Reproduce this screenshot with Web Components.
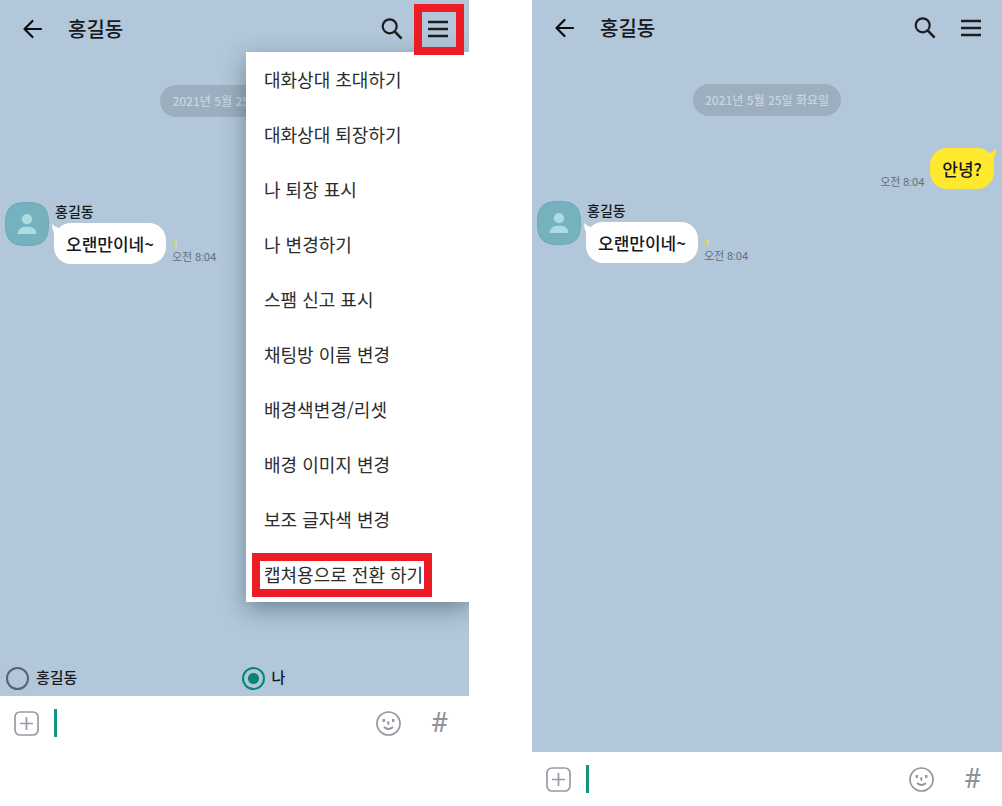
<!DOCTYPE html>
<html lang="ko">
<head>
<meta charset="utf-8">
<meta name="viewport" content="width=device-width, initial-scale=1">
<title>채팅방</title>
<style>
  body {
    --hangul: "Noto Sans CJK KR", "Noto Sans", sans-serif;
    margin: 0;
    background: #fff;
    color: #16181b;
    font-family: Roboto, "Noto Sans CJK KR", sans-serif;
  }
</style>
</head>
<body>
<phone-pair>
  <chat-phone class="editing">
    <chat-header slot="header" name="홍길동" marked></chat-header>
    <date-pill>2021년 5월 25일 화요일</date-pill>
    <peer-message class="later" name="홍길동" time="오전 8:04" unread="1">오랜만이네~</peer-message>
    <sender-picker slot="sender"></sender-picker>
    <chat-composer slot="composer"></chat-composer>
    <option-menu slot="menu">
      <menu-item>대화상대 초대하기</menu-item>
      <menu-item>대화상대 퇴장하기</menu-item>
      <menu-item>나 퇴장 표시</menu-item>
      <menu-item>나 변경하기</menu-item>
      <menu-item>스팸 신고 표시</menu-item>
      <menu-item>채팅방 이름 변경</menu-item>
      <menu-item>배경색변경/리셋</menu-item>
      <menu-item>배경 이미지 변경</menu-item>
      <menu-item>보조 글자색 변경</menu-item>
      <menu-item marked>캡쳐용으로 전환 하기</menu-item>
    </option-menu>
  </chat-phone>
  <chat-phone>
    <chat-header slot="header" name="홍길동"></chat-header>
    <date-pill>2021년 5월 25일 화요일</date-pill>
    <own-message time="오전 8:04">안녕?</own-message>
    <peer-message name="홍길동" time="오전 8:04" unread="1">오랜만이네~</peer-message>
    <chat-composer slot="composer"></chat-composer>
  </chat-phone>
</phone-pair>

<script>
const define = (tag, render) => customElements.define(tag, class extends HTMLElement {
  constructor() {
    super();
    this.attachShadow({ mode: 'open' }).innerHTML = render(this);
  }
});
const buttonReset = `
  button { border: 0; padding: 0; background: none; color: inherit; font: inherit; cursor: pointer; display: block; }
  svg { display: block; }`;

define('phone-pair', () => `
  <style>
    :host { display: grid; grid-template-columns: 469fr 470fr; gap: 63px; align-items: start; min-height: 100vh; }
    ::slotted(*) { min-height: 100vh; }
    ::slotted(.editing) { min-height: calc(100vh - 56px); padding-top: 1px; }
  </style>
  <slot></slot>`);

define('chat-phone', () => `
  <style>
    :host { display: flex; flex-direction: column; position: relative; overflow: hidden; box-sizing: border-box; background: #b2c7da; }
    main { flex: 1; display: flex; flex-direction: column; padding-top: 28px; }
    ::slotted(own-message) { margin-top: 32px; }
    ::slotted(peer-message) { margin-top: 12px; }
    ::slotted(peer-message.later) { margin-top: 85px; }
    ::slotted(option-menu) { position: absolute; top: 52px; right: 0; }
  </style>
  <slot name="header"></slot>
  <main><slot></slot></main>
  <slot name="sender"></slot>
  <slot name="composer"></slot>
  <slot name="menu"></slot>`);

define('chat-header', el => `
  <style>
    :host { display: block; }
    ${buttonReset}
    header { display: flex; align-items: center; height: 56px; padding: 0 20px 0 22px; }
    h1 { flex: 1; margin: 0 0 0 24px; font-family: var(--hangul); font-size: 20px; line-height: 28px; font-weight: 500; }
    .more { position: relative; margin-left: 24px; }
    .mark { position: absolute; z-index: 2; inset: -14px -15px -15px -13px; border: 8px solid #ed1c24; pointer-events: none; }
  </style>
  <header>
    <button aria-label="뒤로"><svg width="22" height="22" viewBox="0 0 22 22" fill="none" stroke="#0c0d0e" stroke-width="2.2" stroke-linecap="round" stroke-linejoin="round"><path d="M19 11H2.5M10.5 3L2.5 11L10.5 19"/></svg></button>
    <h1>${el.getAttribute('name')}</h1>
    <button aria-label="검색"><svg width="22" height="22" viewBox="0 0 22 22" fill="none" stroke="#1b1d1f" stroke-width="2.2"><circle cx="8.7" cy="8.3" r="7"/><path d="M13.6 13.4L20.6 20.6" stroke-width="2.6"/></svg></button>
    <button class="more" aria-label="메뉴"><svg width="22" height="22" viewBox="0 0 22 22" stroke="#1b1d1f" stroke-width="2.4"><path d="M1 4H21M1 11H21M1 18H21"/></svg>${el.hasAttribute('marked') ? '<span class="mark"></span>' : ''}</button>
  </header>`);

define('date-pill', () => `
  <style>
    :host { align-self: center; display: block; box-sizing: border-box; padding: 0 12px; border-radius: 16px; background: #9dafbe; color: #c6d5e1; font-family: var(--hangul); font-size: 12px; line-height: 32px; font-weight: 500; white-space: nowrap; }
  </style>
  <slot></slot>`);

define('own-message', el => `
  <style>
    :host { display: flex; justify-content: flex-end; align-items: flex-end; gap: 6px; padding-right: 8px; }
    time { color: #64707a; font-size: 11px; line-height: 13px; }
    p { position: relative; margin: 0; padding: 0 12px; border-radius: 17px; background: #ffe92f; font-family: var(--hangul); font-size: 17px; line-height: 41px; font-weight: 500; }
    svg { position: absolute; top: 1px; right: -2px; }
  </style>
  <time>${el.getAttribute('time')}</time>
  <p><svg width="12" height="14" viewBox="0 0 12 14" fill="#ffe92f"><path d="M5 4Q9 3 12 0Q12 5 10 9V14Z"/></svg><slot></slot></p>`);

define('peer-message', el => `
  <style>
    :host { display: flex; align-items: flex-start; gap: 5px; padding-left: 5px; }
    h2 { margin: 0; padding-left: 1px; font-size: 14px; line-height: 20px; padding-bottom: 1px; font-weight: 500; }
    .line { display: flex; align-items: flex-end; gap: 6px; }
    p { position: relative; margin: 0; padding: 0 12px; border-radius: 17px; background: #fff; font-family: var(--hangul); font-size: 17px; line-height: 41px; font-weight: 500; }
    p svg { position: absolute; top: 1px; left: -2px; }
    .meta { display: flex; flex-direction: column; color: #64707a; font-size: 11px; line-height: 13px; }
    b { color: #e6dc3c; font-size: 11px; font-weight: 700; }
    .avatar { flex: none; display: block; }
  </style>
  <svg class="avatar" width="44" height="44" viewBox="0 0 44 44" role="img" aria-label="프로필"><path d="M22 .5C38 .5 43.500 6 43.500 22S38 43.500 22 43.500S.5 38 .5 22S6 .5 22 .5Z" fill="#76b2be" stroke="#6ba7b3"/><circle cx="22" cy="17.200" r="5.100" fill="#acdbe2"/><path d="M12.500 32C13 26.500 17 24.800 22 24.800S31 26.500 31.500 32Z" fill="#acdbe2"/></svg>
  <div>
    <h2>${el.getAttribute('name')}</h2>
    <div class="line">
      <p><svg width="12" height="14" viewBox="0 0 12 14" fill="#fff"><path d="M7 4Q3 3 0 0Q0 5 2 9V14Z"/></svg><slot></slot></p>
      <div class="meta"><b>${el.getAttribute('unread')}</b><time>${el.getAttribute('time')}</time></div>
    </div>
  </div>`);

define('sender-picker', () => `
  <style>
    :host { display: block; }
    fieldset { display: grid; grid-template-columns: 1fr 1fr; gap: 8px; margin: 0; border: 0; padding: 0 0 0 6px; height: 36px; min-width: 0; }
    label { display: flex; align-items: center; gap: 7px; font-size: 15px; line-height: 20px; font-weight: 500; }
    input { appearance: none; box-sizing: border-box; width: 23px; height: 23px; margin: 0; border: 2px solid #58626b; border-radius: 50%; }
    input:checked { border-color: #058672; background: radial-gradient(circle, #058672 5px, transparent 6px); }
  </style>
  <fieldset aria-label="보내는 사람">
    <label><input type="radio" name="sender">홍길동</label>
    <label><input type="radio" name="sender" checked>나</label>
  </fieldset>`);

define('chat-composer', () => `
  <style>
    :host { display: block; background: #fff; }
    ${buttonReset}
    form { display: flex; align-items: center; height: 54px; padding: 0 20px 0 14px; color: #8e939b; }
    .caret { width: 3px; height: 28px; margin-left: 15px; background: #149380; }
    input { flex: 1; min-width: 0; border: 0; outline: 0; padding: 0 8px; background: none; font: inherit; font-size: 17px; line-height: 28px; color: #16181b; }
    .hash { margin-left: 28px; width: 20px; font-size: 28px; line-height: 28px; font-weight: 400; }
  </style>
  <form>
    <button type="button" aria-label="첨부"><svg width="25" height="25" viewBox="0 0 25 25" fill="none" stroke="#969aa3" stroke-width="1.700"><rect x="1" y="1" width="23" height="23" rx="5"/><path d="M6 12.500H19M12.500 6V19"/></svg></button>
    <span class="caret"></span>
    <input type="text" aria-label="메시지">
    <button type="button" aria-label="이모티콘"><svg width="25" height="25" viewBox="0 0 25 25" fill="none" stroke="#92969e" stroke-width="1.700"><circle cx="12.500" cy="12.500" r="11.500"/><path d="M8 16Q12.500 20 17 16M13 10.500Q11 12 13 13.500" stroke-width="1.800"/><path d="M7.800 8V11M17.200 8V11" stroke-width="2.400"/></svg></button>
    <button type="button" class="hash">#</button>
  </form>`);

define('option-menu', () => `
  <style>
    :host { display: flex; flex-direction: column; width: 223px; background: #fff; box-shadow: 0 7px 22px rgba(30, 50, 65, .45); }
  </style>
  <slot></slot>`);

define('menu-item', el => `
  <style>
    :host { display: block; }
    ${buttonReset}
    button { position: relative; width: 100%; padding: 0 18px; color: #2c2c2c; text-align: left; font-family: var(--hangul); font-size: 18px; line-height: 55px; white-space: nowrap; }
    .mark { position: absolute; inset: 6px 37px 5px 6px; border: 8px solid #ed1c24; }
  </style>
  <button><slot></slot>${el.hasAttribute('marked') ? '<span class="mark"></span>' : ''}</button>`);
</script>
</body>
</html>
